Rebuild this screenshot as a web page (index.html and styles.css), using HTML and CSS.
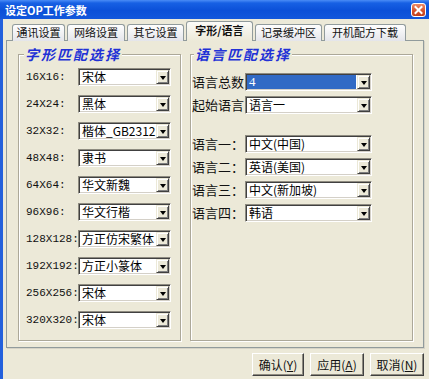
FILE: index.html
```html
<html>
<head>
<meta charset="utf-8"/>
<link rel="stylesheet" href="styles.css">
</head>

<body>

<div class="window">
<div class="titlebar">
<span class="title">设定OP工作参数</span>
<span class="close"><svg width="15" height="14" viewBox="0 0 15 14"><path d="M4.5 4 L10.5 10 M10.5 4 L4.5 10" stroke="#fff" stroke-width="2" stroke-linecap="square"/></svg></span>
</div>

<div class="frame">
<div class="tabs">
<div class="tab">通讯设置</div>
<div class="tab">网络设置</div>
<div class="tab">其它设置</div>
<div class="tab active">字形/语言</div>
<div class="tab">记录缓冲区</div>
<div class="tab">开机配方下载</div>
</div>

<div class="panel">
<fieldset class="group fonts">
<legend>字形匹配选择</legend>
<div class="row"><span class="size">16X16:</span><div class="combo"><span class="val">宋体</span><span class="drop"></span></div></div>
<div class="row"><span class="size">24X24:</span><div class="combo"><span class="val">黑体</span><span class="drop"></span></div></div>
<div class="row"><span class="size">32X32:</span><div class="combo"><span class="val">楷体_GB2312</span><span class="drop"></span></div></div>
<div class="row"><span class="size">48X48:</span><div class="combo"><span class="val">隶书</span><span class="drop"></span></div></div>
<div class="row"><span class="size">64X64:</span><div class="combo"><span class="val">华文新魏</span><span class="drop"></span></div></div>
<div class="row"><span class="size">96X96:</span><div class="combo"><span class="val">华文行楷</span><span class="drop"></span></div></div>
<div class="row"><span class="size">128X128:</span><div class="combo"><span class="val">方正仿宋繁体</span><span class="drop"></span></div></div>
<div class="row"><span class="size">192X192:</span><div class="combo"><span class="val">方正小篆体</span><span class="drop"></span></div></div>
<div class="row"><span class="size">256X256:</span><div class="combo"><span class="val">宋体</span><span class="drop"></span></div></div>
<div class="row"><span class="size">320X320:</span><div class="combo"><span class="val">宋体</span><span class="drop"></span></div></div>
</fieldset>

<fieldset class="group langs">
<legend>语言匹配选择</legend>
<div class="row"><span class="name">语言总数</span><div class="combo"><span class="val selected">4</span><span class="drop"></span></div></div>
<div class="row"><span class="name">起始语言</span><div class="combo"><span class="val">语言一</span><span class="drop"></span></div></div>
<div class="row spaced"><span class="name">语言一：</span><div class="combo"><span class="val">中文(中国)</span><span class="drop"></span></div></div>
<div class="row"><span class="name">语言二：</span><div class="combo"><span class="val">英语(美国)</span><span class="drop"></span></div></div>
<div class="row"><span class="name">语言三：</span><div class="combo"><span class="val">中文(新加坡)</span><span class="drop"></span></div></div>
<div class="row"><span class="name">语言四：</span><div class="combo"><span class="val">韩语</span><span class="drop"></span></div></div>
</fieldset>
</div>

<div class="buttons">
<button class="btn ok">确认(<u>Y</u>)</button>
<button class="btn">应用(<u>A</u>)</button>
<button class="btn">取消(<u>N</u>)</button>
</div>
</div>
</div>

</body>
</html>
```

FILE: styles.css
```css
 /* Style Definitions */
 body
	{margin:0;
	background-color:#ECE9D8;
	font-family:"Noto Sans CJK SC","Liberation Sans",sans-serif;
	font-size:12px;
	color:#000;}
.window
	{width:429px;
	height:379px;
	overflow:hidden;
	background-color:#ECE9D8;}
.titlebar
	{height:19px;
	display:flex;
	align-items:center;
	justify-content:space-between;
	padding:0 3px 0 5px;
	background:linear-gradient(#4a8cf6 0, #1760e4 3px, #0b50d8 55%, #1257dc 100%);}
.title
	{color:#fff;
	font-weight:bold;
	font-size:11px;
	line-height:14px;}
.close
	{display:flex;
	width:15px;
	height:14px;
	border:1px solid #fff;
	border-radius:3px;
	box-sizing:border-box;
	background:linear-gradient(#ee8a66, #d4502a 60%, #c0401e);
	overflow:hidden;}
.close svg
	{margin:-1px;}
.frame
	{height:360px;
	border-left:3px solid #2360dc;
	padding:2px 5px 0 3px;}

/* tabs */
.tabs
	{display:flex;
	align-items:flex-end;
	gap:2px;
	padding-left:6px;
	height:20px;
	margin-bottom:-1px;}
.tab
	{height:17px;
	box-sizing:border-box;
	border:1px solid #919B9C;
	border-bottom:none;
	border-radius:3px 3px 0 0;
	background:linear-gradient(#fefefe, #e4e5ea);
	font-size:11px;
	line-height:15px;
	text-align:center;
	color:#111;}
.tab:nth-child(1) {width:53px;}
.tab:nth-child(2) {width:58px;}
.tab:nth-child(3) {width:57px;}
.tab:nth-child(4) {width:67px;}
.tab:nth-child(5) {width:67px;}
.tab:nth-child(6) {width:82px;}
.tab.active
	{position:relative;
	height:20px;
	line-height:17px;
	font-weight:bold;
	background:linear-gradient(#fbfbf8, #ECE9D8);}
.panel
	{height:308px;
	box-sizing:border-box;
	border:1px solid #919B9C;
	box-shadow:1px 1px 0 #d6d3c6;
	background-color:#ECE9D8;
	padding:5px 10px 6px 11px;
	display:flex;
	gap:9px;}

/* group boxes */
.group
	{margin:0;
	min-width:0;
	box-sizing:border-box;
	border:1px solid #aca899;
	box-shadow:1px 1px 0 #fff, inset 1px 1px 0 #fff;}
.group legend
	{font-size:14px;
	line-height:16px;
	font-weight:bold;
	font-style:italic;
	letter-spacing:2px;
	color:#2231d6;
	background-color:#ECE9D8;
	padding:0 1px;}
.fonts
	{width:163px;
	padding:6px 0 0 7px;}
.fonts legend
	{margin-left:-2px;}
.langs
	{flex:1;
	padding:11px 0 0 1px;}
.langs legend
	{margin-left:2px;}
.row
	{display:flex;
	align-items:center;
	height:18px;}
.fonts .row + .row
	{margin-top:9px;}
.langs .row + .row
	{margin-top:5px;}
.langs .row.spaced
	{margin-top:21px;}
.size
	{width:52px;
	flex:none;
	white-space:nowrap;
	font-family:"Liberation Mono",monospace;
	font-size:11px;
	color:#111;}
.name
	{width:53px;
	flex:none;
	font-size:13px;
	line-height:16px;
	white-space:nowrap;
	color:#111;}

/* combo boxes */
.combo
	{display:flex;
	height:18px;
	box-sizing:border-box;
	border:1px solid;
	border-color:#8e8b80 #fff #fff #8e8b80;
	box-shadow:inset 1px 1px 0 #404040, inset -1px -1px 0 #d4d0c8;
	background-color:#fff;
	padding:1px;}
.fonts .combo
	{width:93px;}
.langs .combo
	{width:127px;}
.val
	{flex:1;
	padding-left:2px;
	font-size:12px;
	line-height:14px;
	white-space:nowrap;}
.val.selected
	{background-color:#316AC5;
	color:#fff;
	font-family:"Liberation Serif",serif;
	font-size:13px;
	margin-right:1px;}
.drop
	{width:13px;
	flex:none;
	box-sizing:border-box;
	border:1px solid;
	border-color:#ECE9D8 #404040 #404040 #ECE9D8;
	box-shadow:inset 1px 1px 0 #fff, inset -1px -1px 0 #808080;
	background-color:#ECE9D8;
	display:flex;
	justify-content:center;
	align-items:center;
	padding-top:2px;}
.drop::after
	{content:"";
	border-left:3px solid transparent;
	border-right:3px solid transparent;
	border-top:4px solid #000;}

/* buttons */
.buttons
	{display:flex;
	justify-content:flex-end;
	gap:6px;
	margin-top:5px;}
.btn
	{width:54px;
	height:23px;
	padding:0;
	border:1px solid;
	border-color:#fff #404040 #404040 #fff;
	box-shadow:inset -1px -1px 0 #8e8b80;
	background-color:#ECE9D8;
	font-family:"Noto Sans CJK SC",sans-serif;
	font-size:12px;
	color:#111;}
.btn.ok
	{width:52px;}
```
